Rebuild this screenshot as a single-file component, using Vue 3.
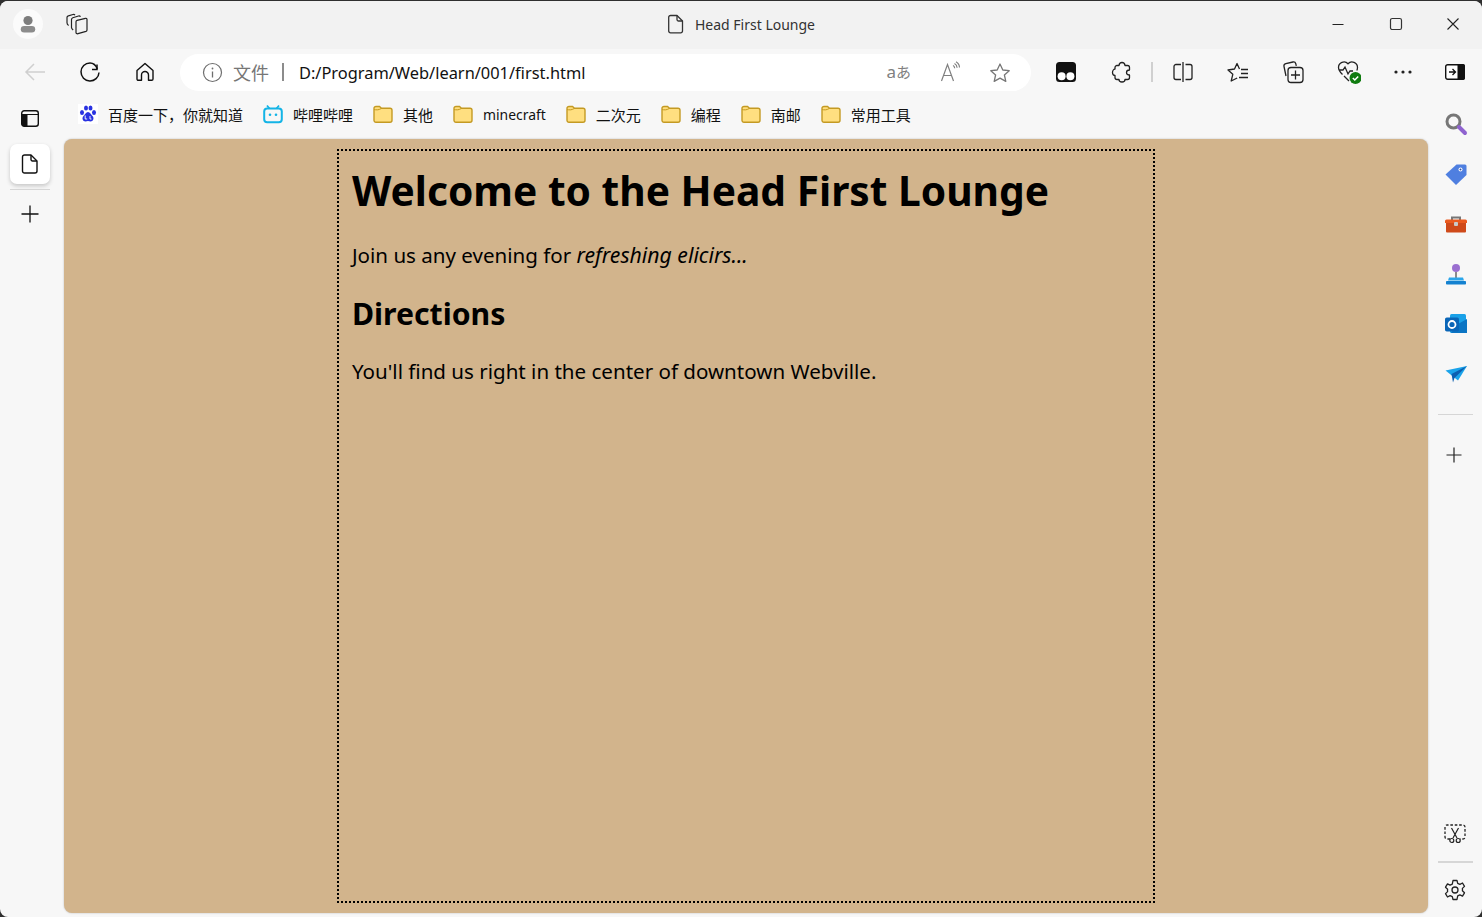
<script setup>
const bookmarks = [
  { label: '其他' },
  { label: 'minecraft', latin: true },
  { label: '二次元' },
  { label: '编程' },
  { label: '南邮' },
  { label: '常用工具' }
]
</script>

<template>
  <div class="window">
    <header class="titlebar">
      <div class="title-left">
        <div class="avatar">
          <svg width="20" height="20" viewBox="0 0 20 20"><circle cx="10" cy="6.500" r="4.600" fill="#7d7d7d"/><rect x="2.800" y="12" width="14.400" height="6.600" rx="3.300" fill="#8c8c8c"/></svg>
        </div>
        <svg class="tabs-ic" width="22" height="22" viewBox="0 0 22 22" fill="none" stroke="#222" stroke-width="1.200" stroke-linejoin="round"><path d="M2.600 12.500C1.600 11.800 1 10.800 1 9.800V4.500C1 3.500 1.500 3 2.300 2.800L7 1.500c.8-.2 1.500 0 2 .6"/><path d="M7.200 17C6.200 16.300 5.500 15.500 5.500 14.500V6.500C5.500 5.500 6 5 6.800 4.700L12.500 3c.8-.2 1.500 0 2 .8"/><path d="M10 8.800c0-.8.400-1.300 1.100-1.500l8.300-2c1-.2 1.600.3 1.600 1.200V17c0 .7-.400 1.200-1 1.400l-8 2.300c-1.100.3-2-.2-2-1.200z"/></svg>
      </div>
      <div class="title-center">
        <svg width="18" height="20" viewBox="0 0 18 20" fill="none" stroke="#333" stroke-width="1.300" stroke-linejoin="round"><path d="M3.500 1.500h6.500l5.500 5.500v10a1.800 1.800 0 0 1-1.800 1.800H3.500A1.800 1.800 0 0 1 1.700 17V3.300a1.800 1.800 0 0 1 1.800-1.800z"/><path d="M10 1.500v4a1.500 1.500 0 0 0 1.500 1.500h4"/></svg>
        <span>Head First Lounge</span>
      </div>
      <div class="win-controls">
        <button class="win-btn"><svg width="14" height="14" viewBox="0 0 14 14"><path d="M1.500 7.500h11" stroke="#222" stroke-width="1.100"/></svg></button>
        <button class="win-btn"><svg width="14" height="14" viewBox="0 0 14 14" fill="none"><rect x="1.500" y="1.500" width="11" height="11" rx="1.800" stroke="#333" stroke-width="1.200"/></svg></button>
        <button class="win-btn"><svg width="14" height="14" viewBox="0 0 14 14"><path d="M1.500 1.500l11 11M12.500 1.500l-11 11" stroke="#222" stroke-width="1.100"/></svg></button>
      </div>
    </header>

    <div class="toolbar">
      <button class="tb-btn"><svg width="22" height="20" viewBox="0 0 22 20" fill="none" stroke="#cfcfcf" stroke-width="1.500"><path d="M21 10H2M10 2l-8 8 8 8"/></svg></button>
      <button class="tb-btn"><svg width="22" height="22" viewBox="0 0 22 22" fill="none" stroke="#111" stroke-width="1.500"><path d="M18 3.500v5h-5"/><path d="M18.300 8C17 4.500 14.300 2 11 2a9 9 0 1 0 9 9.500"/></svg></button>
      <button class="tb-btn"><svg width="20" height="20" viewBox="0 0 20 20" fill="none" stroke="#111" stroke-width="1.400" stroke-linejoin="round"><path d="M2 8.500 10 1.500l8 7v8.500a1.300 1.300 0 0 1-1.300 1.300h-3.200v-5.300a3.500 3.500 0 0 0-7 0v5.300H3.300A1.300 1.300 0 0 1 2 17z"/></svg></button>
      <div class="address">
        <svg width="21" height="21" viewBox="0 0 21 21" fill="none"><circle cx="10.500" cy="10.500" r="9" stroke="#6e6e6e" stroke-width="1.200"/><path d="M10.500 9.500v6" stroke="#6e6e6e" stroke-width="1.300"/><circle cx="10.500" cy="6.500" r=".9" fill="#6e6e6e"/></svg>
        <span class="file-label">文件</span>
        <span class="addr-sep"></span>
        <span class="url">D:/Program/Web/learn/001/first.html</span>
        <span class="addr-actions">
          <span class="translate"><span class="tr-a">a</span>あ</span>
          <svg width="22" height="22" viewBox="-1 0 22 22" fill="none" stroke="#808080" stroke-width="1.200"><path d="M1.500 20 7.500 3.500 13.500 20M3.500 14.500h8"/><path d="M13 4.500c1 .5 1.600 1.500 1.700 2.700M14.500 2.500c1.500.8 2.500 2.400 2.600 4.200M16 .8c2 1.100 3.400 3.300 3.500 5.700"/></svg>
          <svg width="22" height="22" viewBox="0 -1 22 22" fill="none" stroke="#777" stroke-width="1.300" stroke-linejoin="round"><path d="M11 2l2.800 6 6.400.7-4.800 4.300 1.400 6.400L11 16.100l-5.800 3.300 1.400-6.400-4.800-4.300L8.200 8z"/></svg>
        </span>
      </div>
      <button class="tb-btn wide"><svg width="20" height="20" viewBox="0 0 20 20"><path d="M3.500 0h13A3.500 3.500 0 0 1 20 3.500V16.500A3.500 3.500 0 0 1 16.500 20h-13A3.500 3.500 0 0 1 0 16.500V3.500A3.500 3.500 0 0 1 3.500 0z" fill="#111"/><circle cx="5.600" cy="14.300" r="4" fill="#fff"/><circle cx="14.400" cy="14.300" r="4" fill="#fff"/></svg></button>
      <button class="tb-btn"><svg width="22" height="22" viewBox="0 0 22 22" fill="none" stroke="#222" stroke-width="1.300" stroke-linejoin="round"><path d="M8 4.500c.2-2 1.500-3 3-3s2.800 1 3 3h2.500a2 2 0 0 1 2 2V9c-1.800 0-3 .8-3 2.500s1.200 2.500 3 2.500v2.500a2 2 0 0 1-2 2H14c0 1.500-1.200 2.500-3 2.500s-3-1-3-2.500H6a2 2 0 0 1-2-2v-2c-1.500 0-2.500-1.200-2.500-2.700S2.500 8 4 8V6.500a2 2 0 0 1 2-2z"/></svg></button>
      <span class="tb-sep"></span>
      <button class="tb-btn"><svg width="22" height="22" viewBox="0 0 22 22" fill="none" stroke="#222" stroke-width="1.300"><path d="M9 3.500H4A2 2 0 0 0 2 5.500v11a2 2 0 0 0 2 2h5M13.500 3.500H18a2 2 0 0 1 2 2v11a2 2 0 0 1-2 2h-4.500M11 1v20"/></svg></button>
      <button class="tb-btn"><svg width="24" height="22" viewBox="0 0 24 22" fill="none" stroke="#222" stroke-width="1.300" stroke-linejoin="round"><path d="M13.500 8 11 2.500 8.500 8 2 9l4.800 4.300L5.200 20l6-3"/><path d="M15 8.500h7M15 12.500h7M13 16.500h9"/></svg></button>
      <button class="tb-btn"><svg width="24" height="24" viewBox="0 0 24 24" fill="none" stroke="#222" stroke-width="1.300" stroke-linejoin="round"><path d="M5 16 3 6.500C2.700 5 3.500 4 4.800 3.700L12 2c1.500-.3 2.400.4 2.800 1.800l.5 2"/><rect x="7" y="7.500" width="15" height="15" rx="3"/><path d="M14.500 10.500v9M10 15h9"/></svg></button>
      <button class="tb-btn"><svg width="26" height="26" viewBox="-1 0 26 26" fill="none"><path d="M6.500 15.500C4 13 2.500 11 2.500 8.500A5.500 5.500 0 0 1 12 4.700a5.500 5.500 0 0 1 9.500 3.800c0 1-.2 2-.7 3M3 11h4l2-3 3 7 2-3h3M8 17l5 5" stroke="#222" stroke-width="1.300"/><circle cx="19.500" cy="19" r="6" fill="#107c10"/><path d="M16.800 19l2 2 3.400-3.600" stroke="#fff" stroke-width="1.500"/></svg></button>
      <button class="tb-btn"><svg width="18" height="4" viewBox="0 0 18 4" fill="#222"><circle cx="2" cy="2" r="1.600"/><circle cx="9" cy="2" r="1.600"/><circle cx="16" cy="2" r="1.600"/></svg></button>
      <button class="tb-btn side-toggle"><svg width="20" height="16" viewBox="0 0 20 16"><rect x=".7" y=".7" width="18.600" height="14.600" rx="2" fill="#fff" stroke="#111" stroke-width="1.400"/><path d="M12.500 0h5.500a2 2 0 0 1 2 2v12a2 2 0 0 1-2 2h-5.500z" fill="#111"/><path d="M4 8h6M7.500 5l3 3-3 3" fill="none" stroke="#111" stroke-width="1.300"/></svg></button>
    </div>

    <div class="body-grid">
      <aside class="left-rail">
        <svg class="rail-top" width="18" height="17" viewBox="0 0 18 17" fill="none"><rect x=".7" y=".7" width="16.600" height="15.600" rx="2.500" stroke="#111" stroke-width="1.400"/><path d="M.7 4.500h16.600" stroke="#111" stroke-width="1.200"/><path d="M.7 4.500H6.500V16.300H3.200A2.500 2.500 0 0 1 .7 13.800z" fill="#111"/></svg>
        <div class="tab-card">
          <svg width="18" height="20" viewBox="0 0 18 20" fill="none" stroke="#111" stroke-width="1.400" stroke-linejoin="round"><path d="M3.500 1h6.500l6 6v10a2 2 0 0 1-2 2H3.500a2 2 0 0 1-2-2V3a2 2 0 0 1 2-2z"/><path d="M10 1v4.500A1.500 1.500 0 0 0 11.500 7h4.500"/></svg>
        </div>
        <div class="rail-line"></div>
        <svg class="rail-plus" width="18" height="18" viewBox="0 0 18 18"><path d="M9 .5v17M.5 9h17" stroke="#111" stroke-width="1.300"/></svg>
      </aside>

      <div class="main-col">
        <nav class="bookmarks">
          <a class="bm">
            <svg class="bm-ic" width="20" height="20" viewBox="0 0 20 20" fill="#2932e1"><rect width="20" height="20" fill="#fff"/><ellipse cx="4" cy="8.500" rx="2" ry="2.500"/><ellipse cx="8" cy="4" rx="2" ry="2.600"/><ellipse cx="12.500" cy="4" rx="2" ry="2.600"/><ellipse cx="16" cy="8.500" rx="2" ry="2.500"/><path d="M10 8c-2 0-3 2.500-4.500 4-2 2-.8 5.500 2 5.500 1 0 1.500-.4 2.500-.4s1.500.4 2.500.4c2.800 0 4-3.500 2-5.500C13 10.500 12 8 10 8z"/><path d="M7.200 11.500v3.500h2M12 12v3h1.500" stroke="#fff" stroke-width=".9" fill="none"/></svg>
            <span>百度一下，你就知道</span>
          </a>
          <a class="bm">
            <svg class="bm-ic" width="20" height="20" viewBox="0 0 20 20" fill="none"><rect x="1.200" y="4.500" width="17.600" height="13.800" rx="3" stroke="#14b4e6" stroke-width="2"/><path d="M6.500 4.500 4 1.500M13.500 4.500 16 1.500" stroke="#14b4e6" stroke-width="1.800"/><circle cx="7" cy="10.800" r="1.300" fill="#14b4e6"/><circle cx="13" cy="10.800" r="1.300" fill="#14b4e6"/></svg>
            <span>哔哩哔哩</span>
          </a>
          <a v-for="b in bookmarks" :key="b.label" class="bm">
            <svg class="bm-ic" width="20" height="20" viewBox="0 0 20 20"><path d="M1 4.500A2 2 0 0 1 3 2.500h3.500l2 1.800h8.500A2 2 0 0 1 19 6.300v10A2 2 0 0 1 17 18.300H3a2 2 0 0 1-2-2z" fill="#ffdf80" stroke="#c49a23" stroke-width="1.400"/><path d="M1 5.500c2 .6 5 .6 7-.9" fill="#ffd15c" stroke="#c49a23" stroke-width="1"/></svg>
            <span :class="{ latin: b.latin }">{{ b.label }}</span>
          </a>
        </nav>
        <main class="page">
          <div class="sheet">
            <h1>Welcome to the Head First Lounge</h1>
            <p>Join us any evening for <em>refreshing elicirs...</em></p>
            <h2>Directions</h2>
            <p>You'll find us right in the center of downtown Webville.</p>
          </div>
        </main>
      </div>

      <aside class="right-rail">
        <div class="app-list">
          <svg width="24" height="24" viewBox="0 0 24 24" fill="none"><circle cx="9.500" cy="9.500" r="6.500" stroke="#777" stroke-width="3"/><path d="M15 15l6 6" stroke="#8f63cf" stroke-width="4" stroke-linecap="round"/></svg>
          <svg width="24" height="24" viewBox="0 0 24 24"><path d="M1.500 12.500 12.500 2.500H21a1.500 1.500 0 0 1 1.500 1.500v9L12 23z" fill="#4f7fe0"/><circle cx="16.500" cy="7.500" r="2" fill="#fff"/><circle cx="16.500" cy="7.500" r="1" fill="#2b4fa8"/></svg>
          <svg width="24" height="24" viewBox="0 0 24 24"><path d="M8 8V5.500h8V8" fill="none" stroke="#777" stroke-width="2"/><path d="M1 9a1.500 1.500 0 0 1 1.500-1.500h19A1.500 1.500 0 0 1 23 9v2H1z" fill="#ea5a1f"/><path d="M2 11h20v8.500a1 1 0 0 1-1 1H3a1 1 0 0 1-1-1z" fill="#cf4a1a"/><rect x="10" y="10" width="4" height="4" rx="1" fill="#c9c9c9"/></svg>
          <svg width="24" height="24" viewBox="0 0 24 24"><path d="M11 10h2v7h-2z" fill="#8a8a8a"/><circle cx="12" cy="6" r="4" fill="#9a6fd0"/><path d="M5 15.500h14l1 3H4z" fill="#2aa5ea"/><rect x="2" y="19" width="20" height="3.500" rx=".8" fill="#1481d0"/></svg>
          <svg width="24" height="24" viewBox="0 0 24 24"><rect x="6" y="2" width="16" height="19" rx="1.500" fill="#1aa1e8"/><path d="M14 12l9-5v14H7z" fill="#0b75c4"/><rect x="1" y="5.500" width="14" height="14" rx="1.800" fill="#0a66b8"/><circle cx="8" cy="12.500" r="3.500" fill="none" stroke="#fff" stroke-width="1.800"/></svg>
          <svg width="24" height="24" viewBox="0 0 24 24"><path d="M1.500 8.500 23 4l-9 14.500z" fill="#1aa3ea"/><path d="M7.500 12 23 4 10.500 16l-1.500 4.500z" fill="#0c5fb0"/></svg>
        </div>
        <div class="rr-line"></div>
        <svg class="rr-plus" width="18" height="18" viewBox="0 0 18 18"><path d="M9 1.500v15M1.500 9h15" stroke="#222" stroke-width="1.200"/></svg>
        <div class="rr-spacer"></div>
        <svg class="rr-low" width="22" height="20" viewBox="0 0 22 20" fill="none"><path d="M6 15H3a2 2 0 0 1-2-2V3a2 2 0 0 1 2-2h16a2 2 0 0 1 2 2v10a2 2 0 0 1-2 2h-3" stroke="#222" stroke-width="1.300" stroke-dasharray="2.600 1.800"/><path d="M7.500 4l5.500 10M14.500 4 9 14" stroke="#222" stroke-width="1.200"/><circle cx="7.800" cy="16.500" r="2" stroke="#222" stroke-width="1.200"/><circle cx="14.200" cy="16.500" r="2" stroke="#222" stroke-width="1.200"/></svg>
        <div class="rr-line low"></div>
        <svg class="rr-low rr-gear" width="22" height="22" viewBox="0 0 22 22" fill="none" stroke="#222" stroke-width="1.300" stroke-linejoin="round"><circle cx="11" cy="11" r="3"/><path d="M9 1.500h4l.7 2.800 2.200 1 2.600-1.300 2 3.400-2.100 2c.1.800.1 1.600 0 2.400l2.100 2-2 3.400-2.600-1.300-2.200 1L13 20.500H9l-.7-2.800-2.200-1L3.500 18l-2-3.400 2.100-2a8 8 0 0 1 0-2.400l-2.100-2 2-3.400 2.600 1.300 2.200-1z"/></svg>
      </aside>
    </div>
  </div>
</template>

<style>
html, body {
  margin: 0;
  background: #2f2f2f;
}
</style>

<style scoped>
.window {
  width: 1482px;
  height: 916px;
  margin-top: 1px;
  border-radius: 8px;
  overflow: hidden;
  background: #f7f7f7;
  display: flex;
  flex-direction: column;
  font-family: "Noto Sans", "Noto Sans CJK SC", sans-serif;
  color: #000;
}
button {
  border: 0;
  background: none;
  padding: 0;
  display: flex;
  align-items: center;
  justify-content: center;
}
.titlebar {
  height: 48px;
  flex: none;
  box-sizing: border-box;
  padding-bottom: 2px;
  background: #f2f2f2;
  display: grid;
  grid-template-columns: 1fr auto 1fr;
  align-items: center;
}
.title-left {
  display: flex;
  align-items: center;
  gap: 23px;
  padding-left: 13px;
}
.avatar {
  width: 30px;
  height: 30px;
  border-radius: 50%;
  background: #fbfbfb;
  display: flex;
  align-items: center;
  justify-content: center;
}
.title-center {
  display: flex;
  align-items: center;
  gap: 10px;
  font-size: 14px;
  color: #333;
}
.win-controls {
  display: flex;
  justify-content: flex-end;
}
.win-btn {
  width: 57.500px;
  height: 30px;
}
.toolbar {
  height: 48px;
  flex: none;
  display: flex;
  align-items: center;
  padding: 0 0 2px 7px;
  box-sizing: border-box;
}
.tb-btn {
  width: 55px;
  height: 40px;
  flex: none;
}
.tb-btn.wide {
  width: 56px;
}
.address {
  width: 851px;
  height: 37px;
  flex: none;
  margin: 0 7px 0 8px;
  box-sizing: border-box;
  padding: 0 20px 0 22px;
  border-radius: 19px;
  background: #fff;
  display: flex;
  align-items: center;
}
.file-label {
  margin-left: 10px;
  font-size: 18px;
  color: #767676;
}
.addr-sep {
  width: 2px;
  height: 18px;
  margin: 0 15px 0 13px;
  background: #8c8c8c;
}
.url {
  font-size: 16.400px;
  color: #111;
}
.addr-actions {
  margin-left: auto;
  display: flex;
  align-items: center;
  gap: 28px;
}
.translate {
  font-size: 15px;
  line-height: 20px;
  color: #808080;
}
.tr-a {
  font-size: 17px;
}
.tb-sep {
  width: 2px;
  height: 20px;
  margin: 0 2px;
  background: #d0d0d0;
  flex: none;
}
.side-toggle {
  width: 49px;
}
.body-grid {
  flex: 1;
  min-height: 0;
  display: flex;
}
.left-rail {
  width: 64px;
  flex: none;
  box-sizing: border-box;
  padding: 13px 12px 0 8px;
  display: flex;
  flex-direction: column;
  align-items: center;
}
.rail-top {
  flex: none;
}
.tab-card {
  width: 40px;
  height: 40px;
  margin-top: 17px;
  flex: none;
  border-radius: 7px;
  background: #fff;
  box-shadow: 0 2px 4px rgba(0, 0, 0, 0.2);
  display: flex;
  align-items: center;
  justify-content: center;
}
.rail-line {
  width: 40px;
  height: 1px;
  margin-top: 5px;
  background: #d6d6d6;
}
.rail-plus {
  margin-top: 15px;
}
.main-col {
  flex: 1;
  min-width: 0;
  display: flex;
  flex-direction: column;
}
.bookmarks {
  height: 42px;
  flex: none;
  box-sizing: border-box;
  padding: 0 0 8px 14px;
  display: flex;
  align-items: center;
  gap: 20px;
}
.bm {
  display: flex;
  align-items: center;
  gap: 10px;
  color: #111;
  white-space: nowrap;
  font-size: 15px;
}
.latin {
  font-size: 13.900px;
}
.bm-ic {
  flex: none;
}
.page {
  flex: 1;
  min-height: 0;
  margin-bottom: 4px;
  background: #d2b48c;
  border-radius: 8px;
  box-shadow: 0 0 2px rgba(0, 0, 0, 0.25);
  padding: 10px 0;
  box-sizing: border-box;
  display: flex;
  justify-content: center;
}
.sheet {
  width: 818px;
  box-sizing: border-box;
  border: 2px dotted #000;
  padding: 0 13px;
}
h1 {
  margin: 12px 0 0;
  font-size: 40.700px;
  line-height: 55px;
  font-weight: 700;
}
h2 {
  margin: 24px 0 0;
  font-size: 30.200px;
  line-height: 40px;
  font-weight: 700;
}
p {
  margin: 22px 0 0;
  font-size: 20.550px;
  line-height: 30px;
}
em {
  font-size: 21.200px;
}
.right-rail {
  width: 54px;
  flex: none;
  box-sizing: border-box;
  display: flex;
  flex-direction: column;
  align-items: center;
  padding: 15px 0 16px 2px;
}
.app-list {
  display: flex;
  flex-direction: column;
  align-items: center;
  gap: 26px;
}
.rr-line {
  width: 35px;
  height: 1px;
  margin-top: 28px;
  margin-right: 2px;
  background: #d6d6d6;
}
.rr-plus {
  margin-top: 31px;
  margin-right: 4px;
}
.rr-spacer {
  flex: 1;
}
.rr-low {
  margin-right: 2px;
}
.rr-line.low {
  margin-top: 17px;
  height: 2px;
}
.rr-gear {
  margin-top: 16px;
}
</style>
